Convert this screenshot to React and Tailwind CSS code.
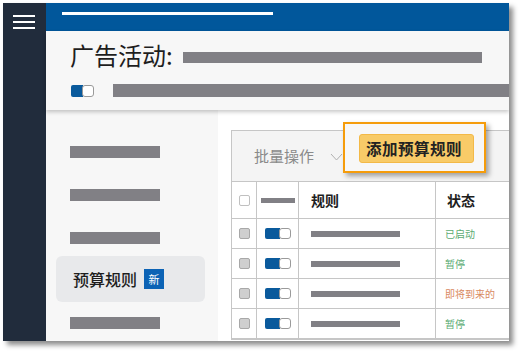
const font = "font-['Noto_Sans_CJK_SC','Noto_Sans',sans-serif]"

function Bar({ className }) {
  return <div className={`bg-[#818085] ${className}`} />
}

function Toggle({ small }) {
  return (
    <div className={`flex ${small ? 'h-[11px]' : 'h-[12px]'}`}>
      <div className={`${small ? 'w-[15px]' : 'w-[12px]'} bg-[#0a5a9c] rounded-l-[2px]`} />
      <div className="w-[12px] bg-white border border-[#9a9a9a] rounded-[3px] -ml-[1px]" />
    </div>
  )
}

const rows = [
  { status: '已启动', color: 'text-[#5bab72]' },
  { status: '暂停', color: 'text-[#5bab72]' },
  { status: '即将到来的', color: 'text-[#d98a5f]' },
  { status: '暂停', color: 'text-[#5bab72]' },
]

export default function App() {
  return (
    <div className={`w-[520px] h-[352px] bg-white pt-[3px] pl-[3px] ${font}`}>
      <div className="w-[506px] h-[338px] flex overflow-hidden shadow-[4px_4px_5px_rgba(0,0,0,0.45)]">
        {/* dark rail */}
        <div className="w-[43px] shrink-0 bg-[#212c3c] pt-[12px] pl-[10px]">
          <div className="flex flex-col gap-[4px] w-[22px]">
            <div className="h-[2px] bg-white" />
            <div className="h-[2px] bg-white" />
            <div className="h-[2px] bg-white" />
          </div>
        </div>

        <div className="flex-1 flex flex-col min-w-0">
          {/* blue top bar */}
          <div className="h-[28px] shrink-0 bg-[#01579b] pt-[9px] pl-[16px]">
            <div className="w-[211px] h-[3px] bg-white" />
          </div>

          {/* page header */}
          <div className="h-[79px] shrink-0 bg-[#f7f7f7] relative z-10 shadow-[0_2px_4px_rgba(0,0,0,0.22)] pl-[24px] pt-[9px]">
            <div className="flex items-center h-[30px]">
              <span className="text-[24px] leading-none text-[#1e1e1e]">广告活动:</span>
              <Bar className="ml-[10px] w-[299px] h-[11px] mt-[4px]" />
            </div>
            <div className="flex items-center mt-[14px]">
              <div className="ml-[1px]">
                <Toggle />
              </div>
              <Bar className="ml-[19px] flex-1 h-[13px]" />
            </div>
          </div>

          {/* body */}
          <div className="flex-1 flex min-h-0">
            <div className="w-[172px] shrink-0 bg-[#f7f7f7] flex flex-col">
              <Bar className="mt-[36px] ml-[24px] w-[90px] h-[12px]" />
              <Bar className="mt-[31px] ml-[24px] w-[90px] h-[12px]" />
              <Bar className="mt-[31px] ml-[24px] w-[90px] h-[12px]" />
              <div className="mt-[12px] ml-[10px] w-[149px] h-[46px] rounded-[6px] bg-[#e8e9eb] flex items-center pl-[17px]">
                <span className="text-[16px] text-[#1e1e1e] font-medium">预算规则</span>
                <span className="ml-[7px] w-[20px] h-[20px] bg-[#0c63b5] text-white text-[11px] flex items-center justify-center">新</span>
              </div>
              <Bar className="mt-[15px] ml-[24px] w-[90px] h-[12px]" />
            </div>

            <div className="flex-1 bg-white pl-[13px] pt-[20px] min-w-0">
              <div className="w-[320px] border border-[#c6c6c6] relative">
                <div className="h-[51px] bg-[#f4f4f4] border-b border-[#c6c6c6] flex items-center pl-[22px]">
                  <span className="text-[15px] text-[#8a8a8a]">批量操作</span>
                  <svg width="13" height="8" viewBox="0 0 13 8" className="ml-[16px] mt-[2px]">
                    <path d="M1 1 L6.5 7 L12 1" fill="none" stroke="#b0b0b0" strokeWidth="1" />
                  </svg>
                </div>

                <div className="grid grid-cols-[25px_42px_137px_1fr] h-[37px] border-b border-[#c6c6c6]">
                  <div className="border-r border-[#c6c6c6] flex items-center justify-center">
                    <div className="w-[11px] h-[11px] bg-white border border-[#c0c0c0] rounded-[2px]" />
                  </div>
                  <div className="border-r border-[#c6c6c6] flex items-center justify-center">
                    <div className="w-[34px] h-[5px] bg-[#818085]" />
                  </div>
                  <div className="border-r border-[#c6c6c6] flex items-center pl-[12px] text-[14px] font-bold text-[#1e1e1e]">规则</div>
                  <div className="flex items-center pl-[11px] text-[14px] font-bold text-[#1e1e1e]">状态</div>
                </div>

                {rows.map((r, i) => (
                  <div key={i} className="grid grid-cols-[25px_42px_137px_1fr] h-[30px] border-b border-[#c6c6c6]">
                    <div className="border-r border-[#c6c6c6] flex items-center justify-center">
                      <div className="w-[11px] h-[11px] bg-[#cfcfcf] border border-[#a8a8a8] rounded-[2px]" />
                    </div>
                    <div className="border-r border-[#c6c6c6] flex items-center justify-center">
                      <Toggle small />
                    </div>
                    <div className="border-r border-[#c6c6c6] flex items-center pl-[12px]">
                      <div className="w-[89px] h-[6px] bg-[#818085]" />
                    </div>
                    <div className={`flex items-center pl-[9px] text-[10px] ${r.color}`}>{r.status}</div>
                  </div>
                ))}

                {/* highlight callout */}
                <div className="absolute left-[111px] top-[-9px] w-[143px] h-[51px] border-2 border-[#f59c0b] bg-[#f7f7f7] shadow-[3px_3px_5px_rgba(0,0,0,0.35)] pl-[14px] pt-[10px]">
                  <div className="w-[115px] h-[29px] bg-[#f8cb68] border border-[#f3b947] rounded-[3px] flex items-center pl-[6px]">
                    <span className="text-[15.5px] font-bold text-[#222] tracking-[0.5px]">添加预算规则</span>
                  </div>
                </div>
              </div>
            </div>
          </div>
        </div>
      </div>
    </div>
  )
}
